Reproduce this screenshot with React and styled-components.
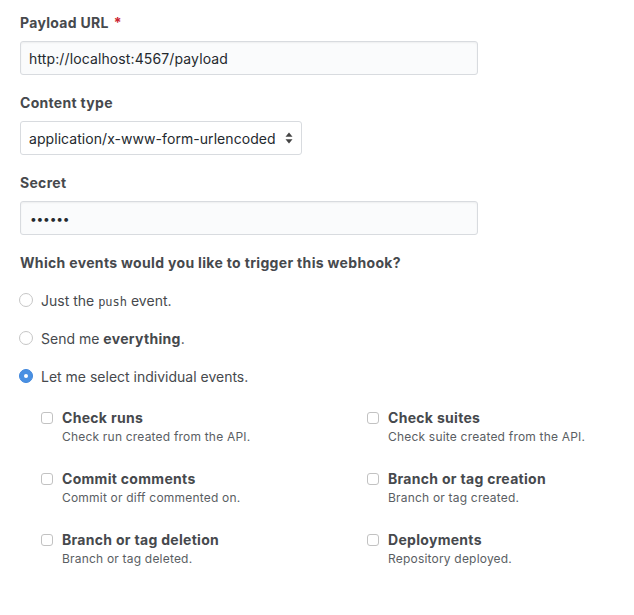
import React from "react";
import styled, { createGlobalStyle } from "styled-components";

const Global = createGlobalStyle`
  html, body { margin: 0; padding: 0; background: #fff; }
  body {
    font-family: Inter, "Liberation Sans", Arial, sans-serif;
    color: #3a3f44;
    -webkit-font-smoothing: antialiased;
  }
`;

const Page = styled.form`
  padding: 13px 20px 20px 20px;
  display: flex;
  flex-direction: column;
`;

const Field = styled.div`
  display: flex;
  flex-direction: column;
  align-items: flex-start;
  margin-bottom: 18px;
`;

const Label = styled.label`
  font-size: 14px;
  font-weight: 700;
  line-height: 20px;
  letter-spacing: 0.3px;
  color: #46494d;
  margin-bottom: 8px;
`;

const Required = styled.span`
  color: #cb2431;
  margin-left: 5px;
`;

const TextInput = styled.div`
  box-sizing: border-box;
  width: ${(p) => p.$width}px;
  height: 34px;
  padding: 0 8px;
  display: flex;
  align-items: center;
  font-size: 14px;
  letter-spacing: 0.12px;
  color: #24292e;
  background: #fafbfc;
  border: 1px solid #d8dbdf;
  border-radius: 3px;
  box-shadow: inset 0 1px 2px rgba(27, 31, 35, 0.06);
`;

const Dots = styled.span`
  font-size: 12px;
  letter-spacing: -0.2px;
  padding-left: 1px;
`;

const Select = styled.div`
  box-sizing: border-box;
  width: 282px;
  height: 34px;
  padding: 0 8px;
  display: flex;
  align-items: center;
  justify-content: space-between;
  font-size: 14px;
  letter-spacing: 0.06px;
  color: #24292e;
  background: #fff;
  border: 1px solid #d8dbdf;
  border-radius: 3px;
`;

const Heading = styled.div`
  font-size: 14px;
  font-weight: 700;
  line-height: 20px;
  letter-spacing: 0.33px;
  color: #46494d;
  margin-bottom: 17px;
`;

const RadioList = styled.div`
  display: flex;
  flex-direction: column;
  gap: 18px;
`;

const RadioRow = styled.label`
  display: flex;
  align-items: center;
  gap: 8px;
  height: 20px;
  font-size: 14px;
  color: #46494d;
`;

const RadioDot = styled.span`
  box-sizing: border-box;
  width: 14px;
  height: 14px;
  margin-left: -1px;
  border-radius: 50%;
  flex: none;
  display: flex;
  align-items: center;
  justify-content: center;
  background: ${(p) => (p.$checked ? "#4a90e2" : "#fff")};
  border: 1px solid ${(p) => (p.$checked ? "#3f86dc" : "#c6c6c6")};
  &::after {
    content: "";
    display: ${(p) => (p.$checked ? "block" : "none")};
    width: 4px;
    height: 4px;
    border-radius: 50%;
    background: #fff;
  }
`;

const Code = styled.span`
  font-family: "DejaVu Sans Mono", "Liberation Mono", monospace;
  font-size: 12px;
`;

const Strong = styled.strong`
  font-weight: 700;
  letter-spacing: 0.3px;
`;

const EventGrid = styled.div`
  display: grid;
  grid-template-columns: 326px 1fr;
  row-gap: 23px;
  margin-top: 22px;
  padding-left: 21px;
`;

const EventItem = styled.label`
  display: flex;
  align-items: flex-start;
  gap: 9px;
`;

const Box = styled.span`
  box-sizing: border-box;
  flex: none;
  width: 12px;
  height: 12px;
  margin-top: 4px;
  border: 1px solid #c2c2c2;
  border-radius: 3px;
  background: #fff;
`;

const EventText = styled.div`
  display: flex;
  flex-direction: column;
`;

const EventTitle = styled.span`
  font-size: 14px;
  font-weight: 700;
  line-height: 20px;
  letter-spacing: 0.3px;
  color: #46494d;
`;

const EventDesc = styled.span`
  font-size: 12px;
  line-height: 18px;
  letter-spacing: 0.2px;
  color: #5a5e63;
`;

const events = [
  ["Check runs", "Check run created from the API."],
  ["Check suites", "Check suite created from the API."],
  ["Commit comments", "Commit or diff commented on."],
  ["Branch or tag creation", "Branch or tag created."],
  ["Branch or tag deletion", "Branch or tag deleted."],
  ["Deployments", "Repository deployed."],
];

const Arrows = () => (
  <svg width="8" height="12" viewBox="0 0 8 12" aria-hidden="true">
    <path d="M4 0.5 L7.5 4.8 L0.5 4.8 Z" fill="#444" />
    <path d="M4 11.5 L7.5 7.2 L0.5 7.2 Z" fill="#444" />
  </svg>
);

export default function App() {
  return (
    <>
      <Global />
      <Page>
        <Field>
          <Label>
            Payload URL<Required>*</Required>
          </Label>
          <TextInput $width={458}>http://localhost:4567/payload</TextInput>
        </Field>
        <Field>
          <Label>Content type</Label>
          <Select>
            <span>application/x-www-form-urlencoded</span>
            <Arrows />
          </Select>
        </Field>
        <Field>
          <Label>Secret</Label>
          <TextInput $width={458}>
            <Dots>••••••</Dots>
          </TextInput>
        </Field>
        <Heading>Which events would you like to trigger this webhook?</Heading>
        <RadioList>
          <RadioRow>
            <RadioDot />
            <span>
              Just the <Code>push</Code> event.
            </span>
          </RadioRow>
          <RadioRow>
            <RadioDot />
            <span>
              Send me <Strong>everything</Strong>.
            </span>
          </RadioRow>
          <RadioRow>
            <RadioDot $checked />
            <span>Let me select individual events.</span>
          </RadioRow>
        </RadioList>
        <EventGrid>
          {events.map(([title, desc]) => (
            <EventItem key={title}>
              <Box />
              <EventText>
                <EventTitle>{title}</EventTitle>
                <EventDesc>{desc}</EventDesc>
              </EventText>
            </EventItem>
          ))}
        </EventGrid>
      </Page>
    </>
  );
}
